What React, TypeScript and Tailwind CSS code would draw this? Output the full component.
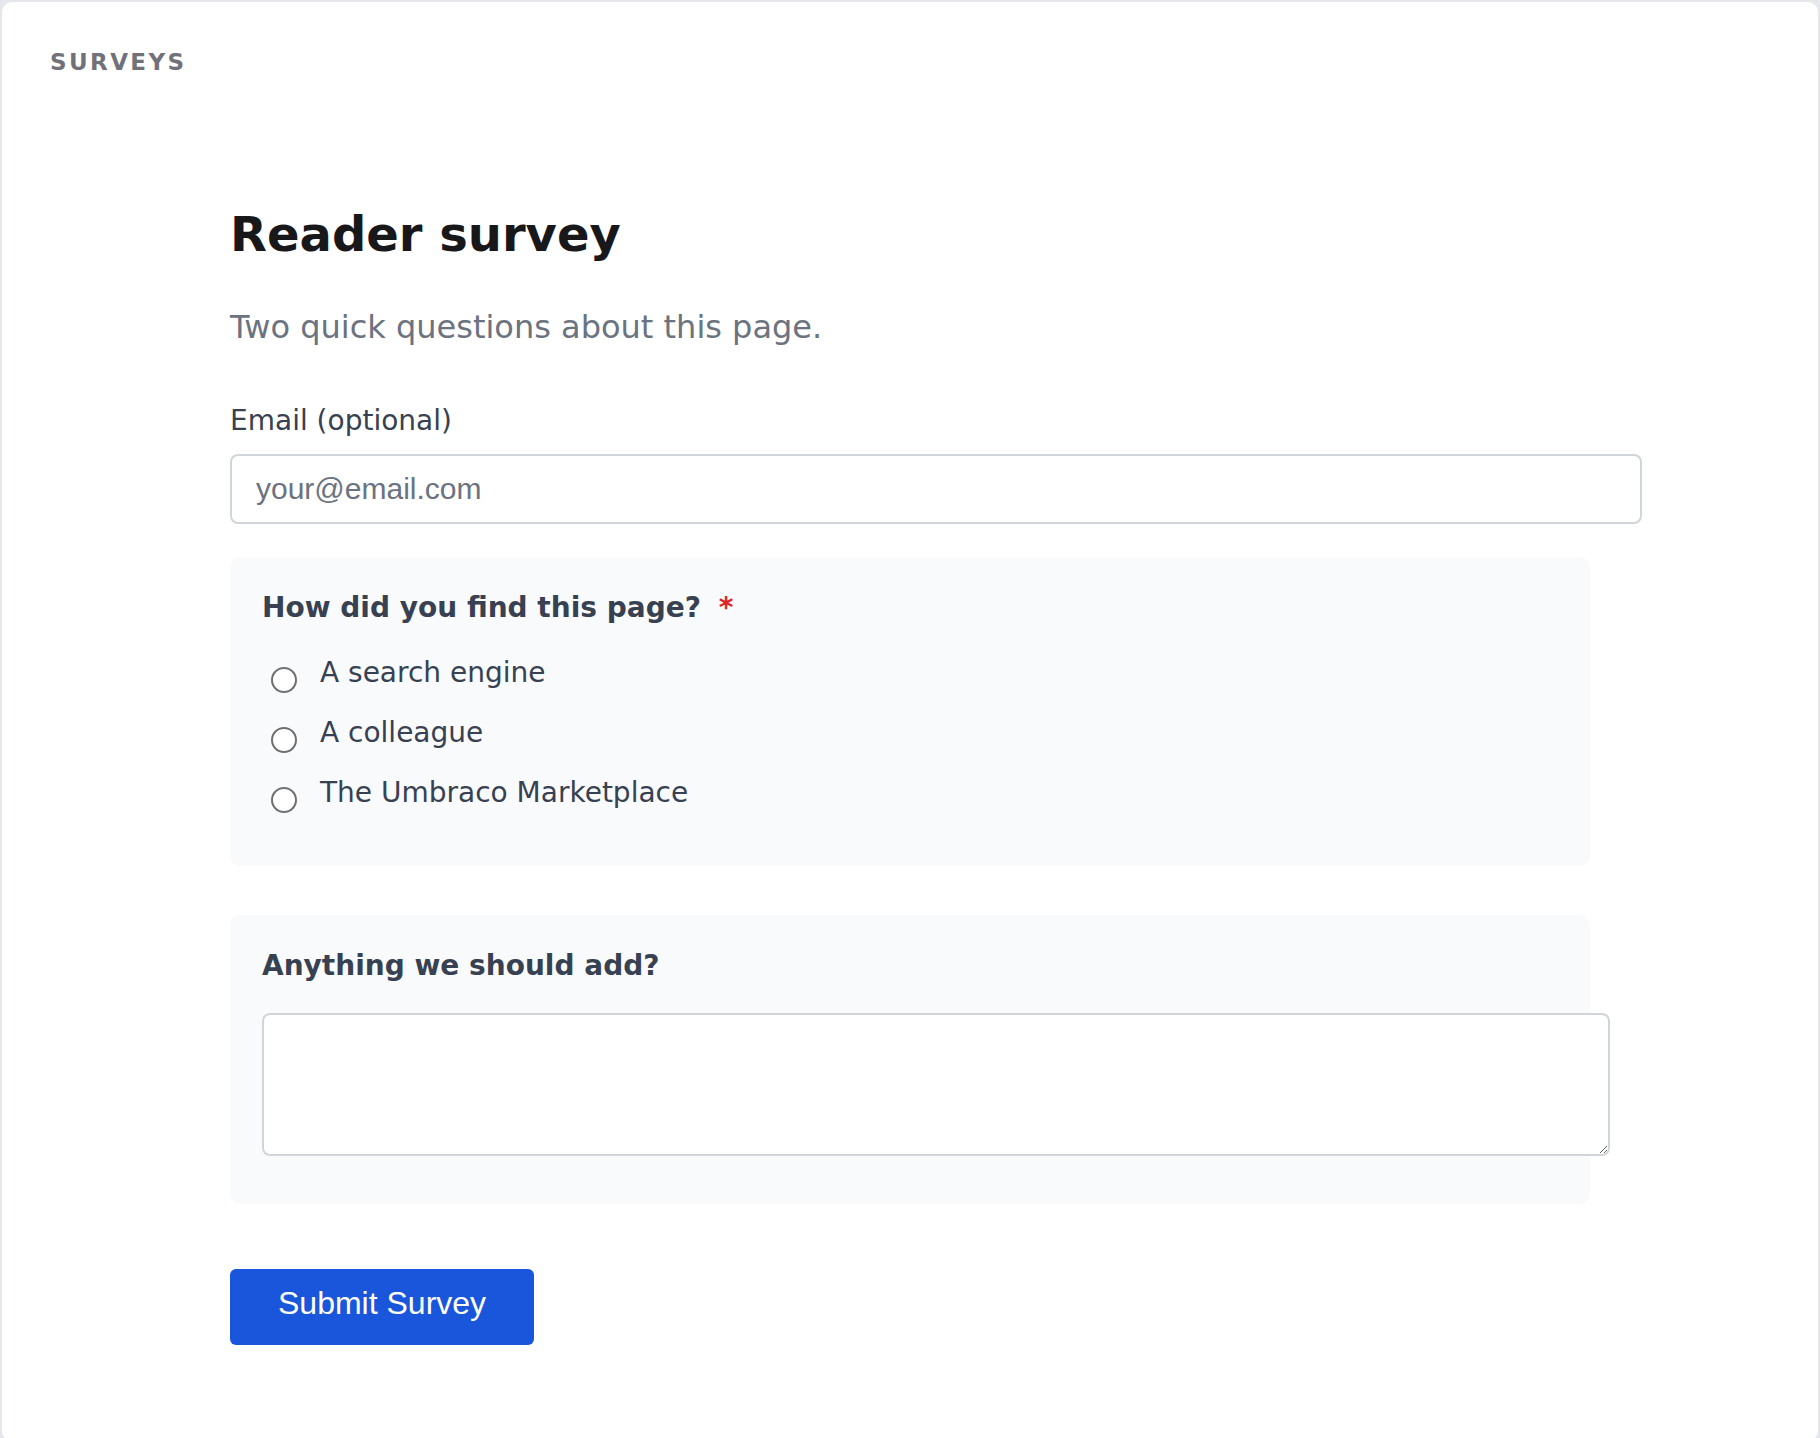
import React, {useState} from "react";

const options = ["A search engine", "A colleague", "The Umbraco Marketplace"]

export default function App() {

    const [email, setEmail] = useState('')
    const [source, setSource] = useState('')
    const [notes, setNotes] = useState('')

    return (
        <div className="min-h-screen bg-[#e5e7eb]" style={{fontFamily: '"DejaVu Sans", sans-serif'}}>
            <div className="min-h-screen bg-white border-2 border-[#e5e7eb] rounded-xl">

                <header className="pl-12 pt-[44px]">
                    <span className="text-[23px] leading-[33px] font-bold tracking-[2.4px] text-[#71717a]">SURVEYS</span>
                </header>

                <main className="mx-auto max-w-[1360px] pb-24">
                    <h1 className="mt-[127px] text-[48px] leading-[1.2] font-bold text-[#18181b]">
                        Reader survey
                    </h1>
                    <p className="mt-[39px] text-[32px] leading-[48px] text-[#6b7280]">
                        Two quick questions about this page.
                    </p>

                    <form onSubmit={e => e.preventDefault()} className="flex flex-col">
                        <label htmlFor="email" className="block mt-[49px] text-[28px] leading-[42px] text-[#374151]">
                            Email (optional)
                        </label>
                        <input
                            id="email"
                            type="email"
                            placeholder="your@email.com"
                            value={email}
                            onChange={e => setEmail(e.target.value)}
                            className="mt-[12px] box-content w-full h-[34px] py-4 px-[24px] border-2 border-[#d1d5db] rounded-lg bg-white text-[30px] text-[#111827] placeholder:text-[#6b7280] outline-none"
                            style={{fontFamily: '"Liberation Sans", Arial, sans-serif'}}
                        />

                        <fieldset className="mt-[33px] bg-[#f9fafb] rounded-[10px] pt-8 px-8 pb-[52px]">
                            <div className="text-[28px] leading-[38px] font-bold text-[#374151]">
                                How did you find this page? <span className="ml-2 text-[#dc2626]">*</span>
                            </div>
                            <div className="mt-[25px] flex flex-col gap-[18px]">
                                {options.map(o => (
                                    <label key={o} className="flex items-start text-[28px] leading-[42px] text-[#374151] cursor-pointer">
                                        <input
                                            type="radio"
                                            name="source"
                                            value={o}
                                            checked={source === o}
                                            onChange={() => setSource(o)}
                                            className="appearance-none shrink-0 mt-[15px] ml-[9px] mr-[23px] w-[26px] h-[26px] rounded-full border-2 border-[#6f6f6f] bg-white checked:border-[7px] checked:border-[#1a56db]"
                                        />
                                        {o}
                                    </label>
                                ))}
                            </div>
                        </fieldset>

                        <div className="mt-[49px] bg-[#f9fafb] rounded-[10px] pt-8 px-8 pb-12">
                            <label htmlFor="notes" className="block text-[28px] leading-[38px] font-bold text-[#374151]">
                                Anything we should add?
                            </label>
                            <textarea
                                id="notes"
                                value={notes}
                                onChange={e => setNotes(e.target.value)}
                                className="mt-[28px] block box-content w-full h-[107px] py-4 px-[24px] border-2 border-[#d1d5db] rounded-lg bg-white text-[28px] text-[#111827] outline-none"
                            />
                        </div>

                        <div className="mt-[65px]">
                            <button
                                type="submit"
                                className="px-12 pt-[15px] pb-[23px] rounded-md bg-[#1a56db] text-white text-[32px] leading-[38px]"
                                style={{fontFamily: '"Liberation Sans", Arial, sans-serif'}}
                            >
                                Submit Survey
                            </button>
                        </div>
                    </form>
                </main>

            </div>
        </div>
    )
}
